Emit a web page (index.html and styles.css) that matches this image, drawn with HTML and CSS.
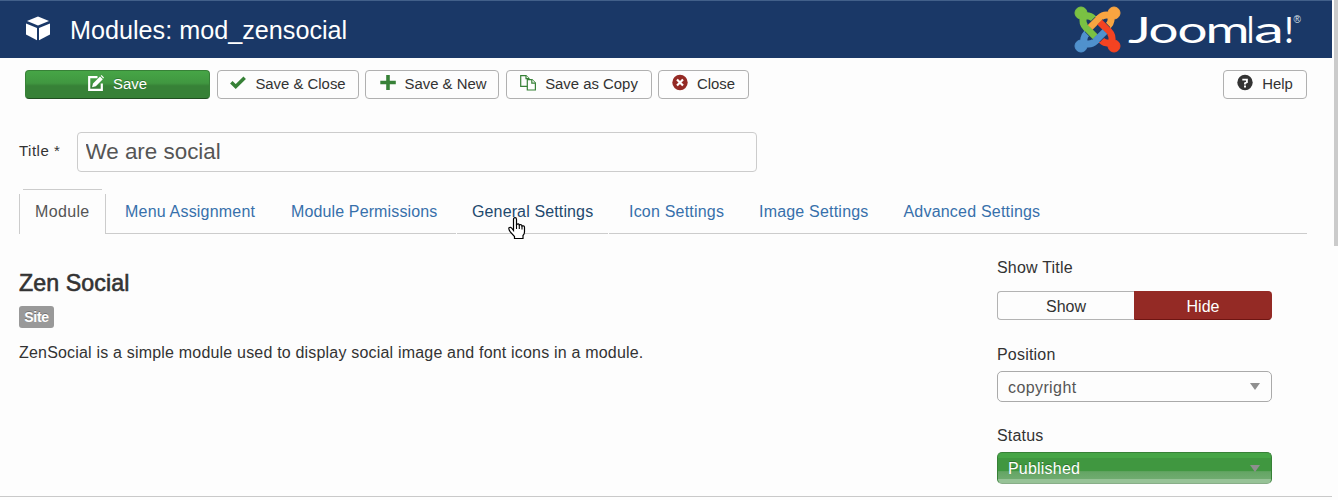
FILE: index.html
```html
<!DOCTYPE html>
<html lang="en">
<head>
<meta charset="utf-8">
<title>Modules: mod_zensocial</title>
<link rel="stylesheet" href="styles.css">
</head>
<body>
<div class="page">
  <header class="header">
    <svg class="cube" width="26" height="26" viewBox="0 0 26 26" fill="#fff">
      <path d="M13 .6 24 5 13 9.6 2 5z"/><path d="M1 7.4 12 12v12.2L1 18.4z"/><path d="M25 7.4 14 12v12.2l11-5.8z"/>
    </svg>
    <h1 class="header-title">Modules: mod_zensocial</h1>
    <svg class="logo" width="230" height="58" viewBox="1074 0 230 58">
      <defs>
        <g id="arm">
          <circle cx="6" cy="6" r="6"/>
          <path d="M20.3 29.8 11 20.5C8 17.5 7.4 14 8.4 10.500M7 9.500C11.500 8.200 15.500 8.600 18.500 11.600L20.200 13.300" fill="none" stroke-width="7"/>
        </g>
      </defs>
      <g transform="translate(1075 7)">
        <use href="#arm" fill="#7ac143" stroke="#7ac143"/>
        <use href="#arm" fill="#f9a541" stroke="#f9a541" transform="rotate(90 22.500 22.500)"/>
        <use href="#arm" fill="#f44321" stroke="#f44321" transform="rotate(180 22.500 22.500)"/>
        <use href="#arm" fill="#5091cd" stroke="#5091cd" transform="rotate(270 22.500 22.500)"/>
        <g fill="none" stroke="#1a3867" stroke-width="8">
          <path d="M20.300 29.800 12.500 22"/>
          <path d="M15.200 20.300 23 12.500"/>
          <path d="M24.700 15.200 32.500 23"/>
          <path d="M29.800 24.700 22 32.500"/>
        </g>
        <g fill="none" stroke-width="6.700">
          <path d="M20.300 29.800 10.800 20.300" stroke="#7ac143"/>
          <path d="M15.200 20.300 24.700 10.800" stroke="#f9a541"/>
          <path d="M24.700 15.200 34.200 24.700" stroke="#f44321"/>
          <path d="M29.800 24.700 20.300 34.200" stroke="#5091cd"/>
        </g>
      </g>
      <text class="wordmark" y="43"><tspan x="1128" textLength="23" lengthAdjust="spacingAndGlyphs">J</tspan><tspan x="1148.500" textLength="30" lengthAdjust="spacingAndGlyphs">o</tspan><tspan x="1177.500" textLength="30" lengthAdjust="spacingAndGlyphs">o</tspan><tspan x="1205.500" textLength="44" lengthAdjust="spacingAndGlyphs">m</tspan><tspan x="1247" textLength="7" lengthAdjust="spacingAndGlyphs">l</tspan><tspan x="1254" textLength="30" lengthAdjust="spacingAndGlyphs">a</tspan><tspan x="1284">!</tspan></text>
      <text class="reg" x="1293.500" y="23">®</text>
    </svg>
  </header>

  <div class="toolbar">
    <button class="btn btn-save">
      <svg class="icon" width="16" height="16" viewBox="0 0 16 16"><path d="M9.500 2.200H1.200v12.600h12.600V8.500" fill="none" stroke="#fff" stroke-width="2.200"/><path d="M4 12.300 5 8.500 12 1.500 14.800 4.300 7.800 11.300zM12.700.8 13.500 0 16 2.500l-.8 1z" fill="#fff"/></svg>
      <span>Save</span>
    </button>
    <button class="btn btn-close-save">
      <svg class="icon" width="16" height="16" viewBox="0 0 16 16"><path d="M1.300 7.300 5.700 11.500 14.700 2.700" fill="none" stroke="#378137" stroke-width="3.500"/></svg>
      <span>Save &amp; Close</span>
    </button>
    <button class="btn btn-new">
      <svg class="icon" width="16" height="16" viewBox="0 0 16 16"><path d="M8 0v15M.3 7.500h15.500" stroke="#378137" stroke-width="3.600"/></svg>
      <span>Save &amp; New</span>
    </button>
    <button class="btn btn-copy">
      <svg class="icon" width="16" height="16" viewBox="0 0 16 16" fill="#fdfdfd" stroke="#378137" stroke-width="1.200"><path d="M.7.600H6L9 3.600V11.400H.7z"/><path d="M6 .6V3.600H9" /><path d="M7.300 4.600H12L15.400 8V15H7.300z"/><path d="M11.800 4.600V8.200H15.400"/></svg>
      <span>Save as Copy</span>
    </button>
    <button class="btn btn-cancel">
      <svg class="icon" width="16" height="16" viewBox="0 0 16 16"><circle cx="8" cy="7.500" r="7.700" fill="#942a25"/><path d="M5 4.500l6 6M11 4.500l-6 6" stroke="#fff" stroke-width="2.200"/></svg>
      <span>Close</span>
    </button>
    <button class="btn btn-help">
      <svg class="icon" width="16" height="16" viewBox="0 0 16 16"><circle cx="8" cy="7.500" r="7.700" fill="#333"/><path d="M5.300 4.600h4.600v2.600L8 8.200v1.200" fill="none" stroke="#fff" stroke-width="1.900"/><path d="M7 10.500h2v1.900H7z" fill="#fff"/></svg>
      <span>Help</span>
    </button>
  </div>

  <div class="title-row">
    <label class="title-label" for="title">Title *</label>
    <input class="title-input" id="title" type="text" value="We are social">
  </div>

  <nav class="tabs">
    <a class="tab tab-active">Module</a>
    <a class="tab tab-menu">Menu Assignment</a>
    <a class="tab tab-perm">Module Permissions</a>
    <a class="tab tab-general">General Settings
      <svg class="cursor" width="18" height="23" viewBox="0 0 18 23"><path d="M5.500 13.500V2.500Q5.500.7 7 .7T8.500 2.500V7.500Q10.800 6 11.300 8 13.500 7 14 9q2.500-.7 2.500 1.500v4.500q0 2-1.500 3.500v3H6.500v-2L2.300 15Q.3 12 1 10.700q1.500-1.200 3 .8l1.500 2z" fill="#fff" stroke="#000" stroke-width="1.200"/><path d="M8.500 7v5M11.300 8v4M14 9v3.500" stroke="#000" stroke-width="1.100"/></svg>
    </a>
    <a class="tab tab-icon">Icon Settings</a>
    <a class="tab tab-image">Image Settings</a>
    <a class="tab tab-adv">Advanced Settings</a>
  </nav>

  <main class="content">
    <section class="info">
      <h2 class="name">Zen Social</h2>
      <span class="badge">Site</span>
      <p class="description">ZenSocial is a simple module used to display social image and font icons in a module.</p>
    </section>
    <aside class="options">
      <div class="option-label">Show Title</div>
      <div class="toggle"><span class="toggle-show">Show</span><span class="toggle-hide">Hide</span></div>
      <div class="option-label">Position</div>
      <div class="select"><span>copyright</span><i class="arrow"></i></div>
      <div class="option-label">Status</div>
      <div class="select select-published"><span>Published</span><i class="arrow"></i></div>
    </aside>
  </main>
</div>
<div class="scroll"><div class="thumb"></div></div>
</body>
</html>
```
FILE: styles.css
```css
* { box-sizing: border-box; }

body {
  margin: 0;
  height: 500px;
  overflow: hidden;
  display: flex;
  background: #fdfdfd;
  color: #333;
  font: 16px/20px "Liberation Sans", Arial, sans-serif;
}

.page {
  width: 1332px;
  height: 497px;
  border-bottom: 1px solid #c9c9c9;
}

.scroll { width: 6px; padding-left: 2px; }
.thumb { height: 246px; background: #cbcbcb; }

.header {
  height: 58px;
  display: flex;
  align-items: center;
  padding: 0 28px 0 25px;
  background: #1a3867;
  border-top: 1px solid #42608a;
}

.cube { margin-top: -2px; }

.header-title {
  margin: 1px auto 0 19px;
  color: #fff;
  font-size: 25.200px;
  font-weight: 400;
  line-height: 30px;
}

.logo { margin-top: -1px; }
.wordmark { fill: #fff; font: 37px Lato, sans-serif; }
.reg { fill: #dde3ec; font: 10px "Liberation Sans", sans-serif; }

.toolbar {
  display: flex;
  padding: 12px 25px 0;
}

.btn {
  height: 29px;
  padding: 0 0 1px;
  display: flex;
  align-items: center;
  justify-content: center;
  gap: 9px;
  border: 1px solid #b0b0b0;
  border-radius: 4px;
  background: #fdfdfd;
  color: #333;
  font: 14.900px/20px "Liberation Sans", Arial, sans-serif;
  white-space: nowrap;
}

.icon { flex: none; margin-top: -2px; overflow: visible; }

.btn-save {
  width: 185px;
  border-color: #378137 #378137 #204f20;
  background: linear-gradient(#46a546, #409740 45%, #378137 55%);
  color: #fff;
  text-shadow: 0 -1px 0 rgba(0, 0, 0, .25);
}

.btn-close-save { width: 142px; margin-left: 7px; }
.btn-new { width: 134px; margin-left: 6px; padding-left: 2px; }
.btn-copy { width: 146px; margin-left: 7px; }
.btn-cancel { width: 91px; margin-left: 6px; }
.btn-help { width: 84px; margin-left: auto; }

.title-row {
  display: flex;
  padding: 33px 19px 0;
}

.title-label {
  width: 58px;
  padding-top: 9px;
  font-size: 15px;
  letter-spacing: .5px;
}

.title-input {
  width: 680px;
  height: 40px;
  padding: 0 8px 1px 7.500px;
  border: 1px solid #ccc;
  border-radius: 4px;
  background: #fdfdfd;
  color: #555;
  font: 22.400px "Liberation Sans", Arial, sans-serif;
}

.tabs {
  height: 45px;
  margin: 17px 25px 0 19px;
  display: flex;
  border-bottom: 1px solid #ccc;
}

.tab {
  position: relative;
  height: 45px;
  margin-right: 2px;
  padding: 13px 0 0 16px;
  color: #3770ab;
  letter-spacing: .13px;
  white-space: nowrap;
}

/* Three separate rules leave the tab's corners open */
.tab-active {
  width: 87px;
  background:
    linear-gradient(#ccc, #ccc) 4px 0 / 79px 1px no-repeat,
    linear-gradient(#ccc, #ccc) 0 5px / 1px 40px no-repeat,
    linear-gradient(#ccc, #ccc) 86px 5px / 1px 40px no-repeat,
    #fdfdfd;
  color: #555;
  letter-spacing: .35px;
}

.tab-menu { width: 164px; padding-left: 17px; letter-spacing: .2px; }
.tab-perm { width: 181px; padding-left: 17px; margin-right: 1px; }

.tab-general {
  width: 154px;
  color: #1f496e;
  background:
    linear-gradient(#fdfdfd, #fdfdfd) 0 44px / 1px 1px no-repeat,
    linear-gradient(#fdfdfd, #fdfdfd) 152px 44px / 1px 1px no-repeat;
}

.tab-icon { width: 129px; padding-left: 17px; letter-spacing: .2px; }
.tab-image { width: 143px; letter-spacing: .2px; }
.tab-adv { letter-spacing: .2px; padding-left: 15.500px; }

.cursor {
  position: absolute;
  left: 52px;
  top: 28px;
}

.content {
  display: flex;
  justify-content: space-between;
  padding: 0 60px 0 19px;
}

.info { padding-top: 35px; }

.name {
  margin: 0;
  font-size: 23.200px;
  font-weight: 400;
  line-height: 28px;
  letter-spacing: .1px;
  -webkit-text-stroke: .6px #333;
}

.badge {
  display: block;
  width: 35px;
  height: 22px;
  margin-top: 9px;
  border-radius: 3px;
  background: #999;
  color: #fff;
  font-size: 14px;
  font-weight: 700;
  letter-spacing: -.3px;
  line-height: 22px;
  text-align: center;
  text-shadow: 0 -1px 0 rgba(0, 0, 0, .25);
}

.description {
  margin: 15px 0 0;
  letter-spacing: .19px;
}

.options {
  width: 275px;
  padding-top: 24px;
}

.option-label { letter-spacing: .2px; }

.toggle {
  height: 29px;
  margin: 13px 0 25px;
  display: flex;
  line-height: 29px;
  text-align: center;
}

.toggle-show {
  width: 137px;
  border: 1px solid #b3b3b3;
  border-right: 0;
  border-radius: 4px 0 0 4px;
}

.toggle-hide {
  width: 138px;
  border: 1px solid #942a25;
  border-bottom-color: #6d1512;
  border-radius: 0 4px 4px 0;
  background: #942a25;
  color: #fff;
}

.select {
  height: 31px;
  margin: 6px 0 24px;
  padding: 2px 11px 0 10px;
  display: flex;
  align-items: center;
  justify-content: space-between;
  border: 1px solid #aaa;
  border-radius: 5px;
  color: #555;
  letter-spacing: .4px;
}

.arrow {
  border: 5px solid transparent;
  border-top: 7px solid #8f8f8f;
  border-bottom: 0;
  margin-top: -2px;
}

.select-published {
  height: 32px;
  border-color: #378137;
  border-bottom-color: #87ad87;
  background: linear-gradient(#46a546 0, #46a546 15%, #409740 18%, #409740 60%, #64a564 62%, #6fab6f 85%, #96c296 88%);
  color: #fff;
  letter-spacing: .2px;
  text-shadow: 0 -1px 0 rgba(0, 0, 0, .25);
}
```
